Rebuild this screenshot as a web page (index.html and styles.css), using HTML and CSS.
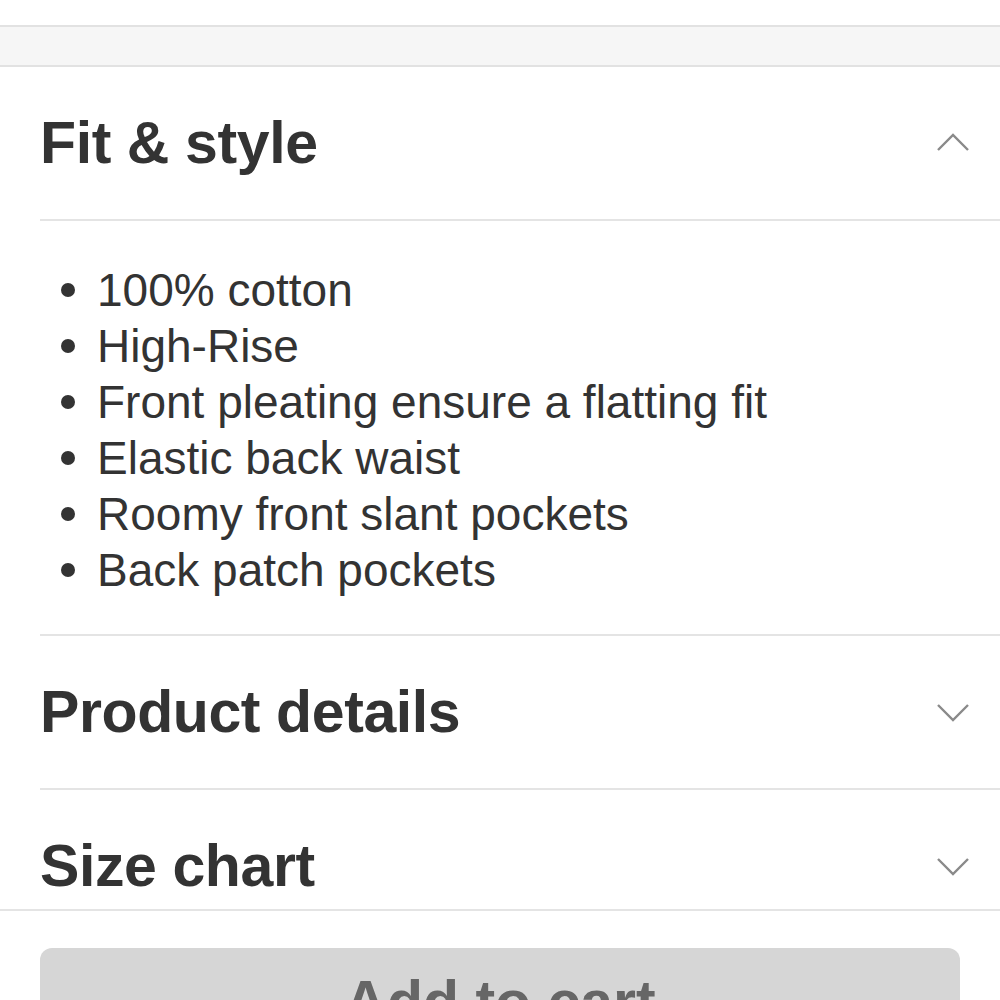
FILE: index.html
```html
<!DOCTYPE html>
<html lang="en">
<head>
    <meta charset="UTF-8">
    <meta name="viewport" content="width=device-width, initial-scale=1.0">
    <title>Product info</title>
    <link rel="stylesheet" href="styles.css">
</head>
<body>
    <div class="top-space"></div>
    <div class="divider-band"></div>
    <div class="accordion">
        <section class="panel open">
            <div class="panel-head">
                <h2>Fit &amp; style</h2>
                <svg class="chevron" width="34" height="20" viewBox="0 0 34 20"><polyline points="2,17 17,2 32,17" fill="none" stroke="#8a8a8a" stroke-width="2.4"/></svg>
            </div>
            <ul class="panel-body">
                <li>100% cotton</li>
                <li>High-Rise</li>
                <li>Front pleating ensure a flatting fit</li>
                <li>Elastic back waist</li>
                <li>Roomy front slant pockets</li>
                <li>Back patch pockets</li>
            </ul>
        </section>
        <section class="panel">
            <div class="panel-head">
                <h2>Product details</h2>
                <svg class="chevron" width="34" height="20" viewBox="0 0 34 20"><polyline points="2,3 17,18 32,3" fill="none" stroke="#8a8a8a" stroke-width="2.4"/></svg>
            </div>
        </section>
        <section class="panel">
            <div class="panel-head">
                <h2>Size chart</h2>
                <svg class="chevron" width="34" height="20" viewBox="0 0 34 20"><polyline points="2,3 17,18 32,3" fill="none" stroke="#8a8a8a" stroke-width="2.4"/></svg>
            </div>
        </section>
    </div>
    <footer class="cart-bar">
        <button type="button" class="cart-btn">Add to cart</button>
    </footer>
</body>
</html>
```

FILE: styles.css
```css
body {
    margin: 0;
    font-family: 'Liberation Sans', Arial, sans-serif;
    color: #333;
    background: #fff;
}
.top-space {
    height: 25px;
}
.divider-band {
    height: 38px;
    background-color: #f6f6f6;
    border-top: 2px solid #e2e2e2;
    border-bottom: 2px solid #e2e2e2;
}
.accordion {
    padding-left: 40px;
}
.panel {
    border-bottom: 2px solid #e4e4e4;
}
.panel-head {
    height: 152px;
    display: flex;
    align-items: center;
    justify-content: space-between;
    padding-right: 30px;
}
.open .panel-head {
    border-bottom: 2px solid #e4e4e4;
}
h2 {
    margin: 0;
    font-size: 59px;
    line-height: 1;
    font-weight: bold;
    color: #333;
    letter-spacing: -0.4px;
}
.panel-body {
    list-style: none;
    margin: 0;
    padding: 41px 0 36px 0;
}
.panel-body li {
    display: flex;
    align-items: center;
    font-size: 46px;
    line-height: 56px;
    color: #333;
}
.panel-body li::before {
    content: "";
    width: 14px;
    height: 14px;
    border-radius: 50%;
    background: #333;
    margin: 0 22px 0 21px;
    flex-shrink: 0;
}
.cart-bar {
    position: fixed;
    left: 0;
    right: 0;
    top: 909px;
    height: 200px;
    background: #fff;
    border-top: 2px solid #e4e4e4;
    padding: 37px 40px 0 40px;
}
.cart-btn {
    display: block;
    width: 920px;
    border: none;
    border-radius: 12px;
    background-color: #d6d6d6;
    color: #666;
    font-family: 'Liberation Sans', Arial, sans-serif;
    font-size: 59px;
    line-height: 1;
    font-weight: bold;
    padding: 25px 0 40px 0;
}
```
